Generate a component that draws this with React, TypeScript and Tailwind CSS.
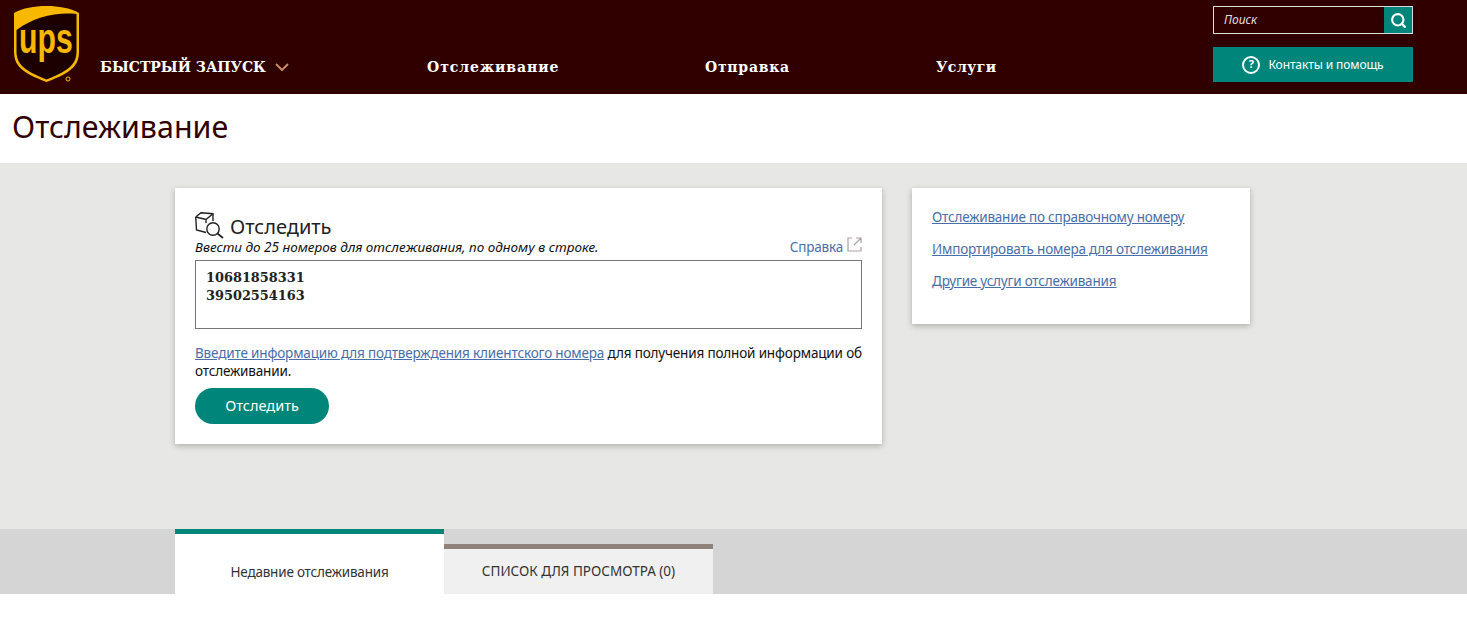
import React from 'react';
import { Search } from 'lucide-react';

const sans = 'font-["Noto_Sans",sans-serif]';

const UpsLogo = () => (
    <svg width="70" height="84" viewBox="0 0 70 84" className="shrink-0">
        <path d="M32.5 1C20 1 9 3 0 8V46C0 60 6 67 32.5 77 59 67 65 60 65 46V8C56 3 45 1 32.5 1Z" fill="#f9b800" />
        <path d="M2.5 25C20 12 42 7 62.5 9V46C62.5 58 57 65 32.5 74.5 8 65 2.5 58 2.5 46Z" fill="#1c0000" />
        <text x="44.4" y="48" transform="scale(0.72 1)" textAnchor="middle" fill="#f9b800" fontFamily="Liberation Sans" fontWeight="700" fontSize="42">ups</text>
        <circle cx="54" cy="74" r="2" fill="none" stroke="#f9b800" strokeWidth="1" />
    </svg>
);

const TrackIcon = () => (
    <svg width="29" height="27" viewBox="0 0 29 27" fill="none" stroke="#222" strokeWidth="1.4" className="shrink-0">
        <path d="M.7 5 6 .7 18 1.7V9M.7 5 11 7.5 18 1.7M11 7.5V11M.7 5 1.5 18 11 20.5" />
        <circle cx="18" cy="17" r="6.2" />
        <path d="m22.5 21.5 5.5 4.5" strokeWidth="1.7" />
    </svg>
);

const NavLink = ({ label, className }: { label: string; className: string }) => (
    <a className={`font-["DejaVu_Serif",serif] font-bold text-[14px] whitespace-nowrap text-white ${className}`}>{label}</a>
);

export default function App() {
    return (
        <div className={`min-h-[617px] bg-white ${sans}`}>
            <header className="h-[94px] bg-[#300000] flex justify-between pl-[14px] pr-[54px]">
                <div className="flex">
                    <div className="pt-[5px]"><UpsLogo /></div>
                    <div className="flex items-center h-[20px] mt-[57px] ml-[16px]">
                        <NavLink label="БЫСТРЫЙ ЗАПУСК" className="w-[175px] tracking-[0px]" />
                        <svg width="14" height="8" viewBox="0 0 14 8" fill="none" stroke="#c98a63" strokeWidth="2" className="mr-[138px]">
                            <path d="m1 1 6 6 6-6" />
                        </svg>
                        <NavLink label="Отслеживание" className="w-[278px] tracking-[0.95px]" />
                        <NavLink label="Отправка" className="w-[231px] tracking-[0.75px]" />
                        <NavLink label="Услуги" className="tracking-[0.5px]" />
                    </div>
                </div>
                <div className="w-[200px] pt-[6px]">
                    <div className="flex h-[28px] border border-[#dcdcd8]">
                        <div className="flex-1 pl-[10px] text-[12px] italic text-[#e8dcdc] leading-[26px]">Поиск</div>
                        <div className="w-[28px] bg-[#00857a] flex items-center justify-center">
                            <Search size={17} color="#fff" strokeWidth={3} />
                        </div>
                    </div>
                    <div className="mt-[13px] h-[35px] bg-[#00857a] flex items-center justify-center gap-[8px] text-white text-[12px] tracking-[-0.1px]">
                        <span className="w-[18px] h-[18px] rounded-full border-2 border-white flex items-center justify-center text-[11px] font-bold">?</span>
                        Контакты и помощь
                    </div>
                </div>
            </header>

            <div className="h-[69px] pl-[12px] pt-[12px] text-[30.4px] leading-[41px] text-[#300000]">Отслеживание</div>

            <main className="h-[366px] bg-[#e7e7e5] pl-[175px] pt-[25px] flex items-start gap-[30px]">
                <section className="w-[707px] h-[256px] bg-white shadow-[0_2px_6px_rgba(0,0,0,0.25)] pt-[23px] px-[20px]">
                    <div className="flex items-center gap-[6px] h-[28px] text-[20px] text-[#222]">
                        <TrackIcon />
                        <span className="pt-[4px]">Отследить</span>
                    </div>
                    <div className="flex justify-between items-end h-[18px]">
                        <i className="text-[13.5px] text-[#111]">Ввести до 25 номеров для отслеживания, по одному в строке.</i>
                        <span className="flex items-center gap-[4px] text-[13.5px] tracking-[-0.2px] text-[#4a6ea8]">
                            Справка
                            <svg width="15" height="15" viewBox="0 0 15 15" fill="none" stroke="#b0a0a8" strokeWidth="1.2" className="mb-[4px]">
                                <path d="M5 1H1v13h13v-4M7 8l7-7M9 1h5v5" />
                            </svg>
                        </span>
                    </div>
                    <div className="mt-[3px] h-[69px] border border-[#767676] pl-[10px] pt-[8px] font-['DejaVu_Serif',serif] font-bold text-[12.9px] leading-[18px] text-[#222]">
                        10681858331<br />39502554163
                    </div>
                    <p className="mt-[15px] text-[13.5px] tracking-[-0.16px] leading-[18px] text-[#111]">
                        <a className="underline text-[#4a6ea8]">Введите информацию для подтверждения клиентского номера</a> для получения полной информации об отслеживании.
                    </p>
                    <button className="mt-[8px] w-[134px] h-[36px] rounded-full bg-[#00857a] text-white text-[14.5px]">Отследить</button>
                </section>

                <aside className="w-[338px] h-[136px] bg-white shadow-[0_2px_6px_rgba(0,0,0,0.25)] pl-[20px] pt-[20px] flex flex-col gap-[14px] text-[13.5px] tracking-[-0.2px] leading-[18px] text-[#4a6ea8] underline">
                    <a>Отслеживание по справочному номеру</a>
                    <a>Импортировать номера для отслеживания</a>
                    <a>Другие услуги отслеживания</a>
                </aside>
            </main>

            <nav className="h-[65px] bg-[#d5d5d5] pl-[175px] flex items-end text-[13.5px] text-[#333]">
                <div className="w-[269px] h-[65px] bg-white border-t-[5px] border-[#00857a] flex items-center justify-center pt-[16px] tracking-[-0.2px]">Недавние отслеживания</div>
                <div className="w-[269px] h-[50px] bg-[#f0f0f0] border-t-[5px] border-[#8f827b] flex items-center justify-center">СПИСОК ДЛЯ ПРОСМОТРА (0)</div>
            </nav>
        </div>
    );
}
